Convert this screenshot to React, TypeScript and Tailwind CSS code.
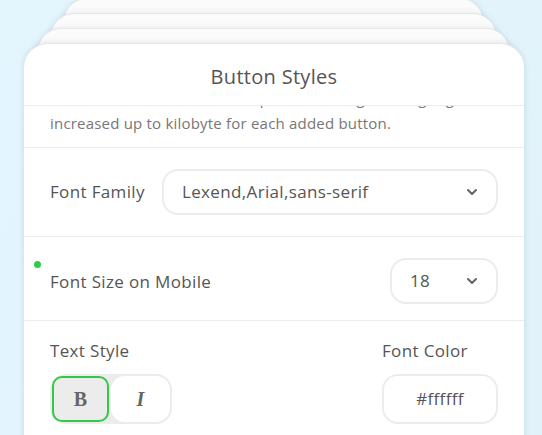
import { ChevronDown } from "lucide-react";

const font = { fontFamily: "'Open Sans', 'Noto Sans', sans-serif" };

function Select({ value, className }: { value: string; className?: string }) {
  return (
    <div
      className={`flex h-[46px] items-center justify-between rounded-[16px] border-2 border-[#ececec] bg-white pl-[18px] pr-[16px] ${className ?? ""}`}
    >
      <span className="text-[17px] tracking-[0.35px] text-[#555]">{value}</span>
      <ChevronDown size={16} strokeWidth={3} className="text-[#666]" />
    </div>
  );
}

export default function App() {
  return (
    <div
      className="relative h-[435px] w-[542px] overflow-hidden bg-[linear-gradient(120deg,#e4f6fd_0%,#e1f2fa_100%)]"
      style={font}
    >
      {/* stacked cards behind the dialog */}
      <div className="absolute left-[63px] top-[-2px] h-[80px] w-[421px] rounded-[24px] border border-[#e6e6e6] bg-[#fbfbfb] shadow-[0_0_6px_rgba(0,60,100,0.10)]" />
      <div className="absolute left-[50px] top-[13px] h-[80px] w-[447px] rounded-[24px] border border-[#e6e6e6] bg-[#fbfbfb] shadow-[0_0_6px_rgba(0,60,100,0.10)]" />
      <div className="absolute left-[37px] top-[28px] h-[80px] w-[473px] rounded-[24px] border border-[#e6e6e6] bg-[#fbfbfb] shadow-[0_0_6px_rgba(0,60,100,0.10)]" />

      {/* dialog */}
      <div className="relative ml-[24px] mt-[43px] w-[500px] rounded-t-[24px] border-t border-[#e6e6e6] bg-white shadow-[0_0_6px_rgba(0,60,100,0.14)]">
        <div className="flex h-[62px] items-center justify-center border-b border-[#ececec] pt-[5px]">
          <h1 className="text-[20px] tracking-[0.3px] text-[#555]">Button Styles</h1>
        </div>

        {/* scrolled description, first line scrolled under the header */}
        <div className="h-[42px] overflow-hidden border-b border-[#ececec] px-[26px] text-[15px] leading-[24px] tracking-[0.2px] text-[#777]">
          <div className="-mt-[20px] whitespace-nowrap">Each button adds its own script, so the widget's weight gets</div>
          <div className="mt-[1px]">increased up to kilobyte for each added button.</div>
        </div>

        {/* font family */}
        <div className="flex h-[89px] items-center gap-[17px] border-b border-[#ececec] px-[26px]">
          <span className="w-[95px] shrink-0 whitespace-nowrap text-[17px] tracking-[0.35px] text-[#555]">Font Family</span>
          <Select value="Lexend,Arial,sans-serif" className="flex-1" />
        </div>

        {/* font size */}
        <div className="relative flex h-[84px] items-center justify-between border-b border-[#ececec] px-[26px]">
          <span className="absolute left-[10px] top-[24px] h-[7px] w-[7px] rounded-full bg-[#2fcc45]" />
          <span className="mt-[6px] text-[17px] tracking-[0.35px] text-[#555]">Font Size on Mobile</span>
          <Select value="18" className="mt-[5px] w-[108px]" />
        </div>

        {/* text style / colour */}
        <div className="flex justify-between px-[26px] pt-[18px]">
          <div className="flex flex-col gap-[12px]">
            <span className="text-[17px] leading-[23px] tracking-[0.35px] text-[#555]">Text Style</span>
            <div className="flex h-[50px] w-[122px] rounded-[16px] bg-[#ececec] p-[2px]">
              <button className="flex w-[57px] items-center justify-center rounded-[10px] border-2 border-[#34c84a] bg-[#ececec] text-[20px] font-bold text-[#666]" style={{ fontFamily: "'Liberation Serif', serif" }}>
                B
              </button>
              <button className="ml-[2px] flex flex-1 items-center justify-center rounded-[14px] bg-white text-[20px] font-bold italic text-[#666]" style={{ fontFamily: "'Liberation Serif', serif" }}>
                I
              </button>
            </div>
          </div>
          <div className="flex flex-col gap-[12px]">
            <span className="text-[17px] leading-[23px] tracking-[0.35px] text-[#555]">Font Color</span>
            <div className="flex h-[50px] w-[116px] items-center justify-center rounded-[16px] border-2 border-[#ececec] text-[17px] tracking-[0.35px] text-[#555]">
              #ffffff
            </div>
          </div>
        </div>
        <div className="h-[20px]" />
      </div>
    </div>
  );
}
